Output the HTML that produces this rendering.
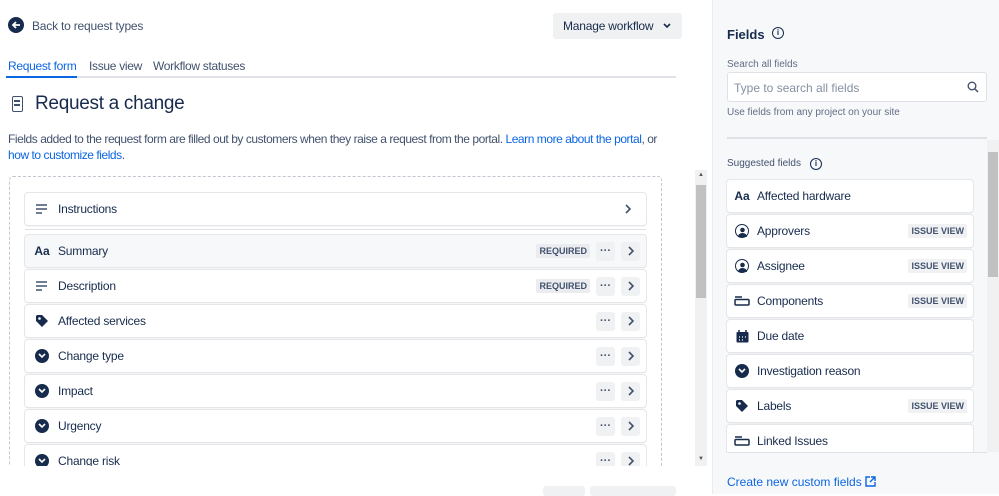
<!DOCTYPE html>
<html><head><style>
*{box-sizing:border-box;margin:0;padding:0}
body{width:999px;height:494px;overflow:hidden;background:#fff;font-family:"Liberation Sans",sans-serif;color:#172b4d;position:relative;font-size:12px}
.a{position:absolute;white-space:nowrap}
.row{position:absolute;left:25px;width:621px;height:32px;border-radius:3px;box-shadow:0 0 0 1px #e4e6ea,0 1px 1px #c1c7d0;background:#fff;display:flex;align-items:center}
.row .ic{width:32px;display:flex;justify-content:center;align-items:center;margin-left:1px}
.row .t{flex:1;font-size:12px;color:#172b4d;letter-spacing:-0.2px}
.req{background:#ebecf0;color:#42526e;font-size:9px;font-weight:bold;padding:2px 3px;border-radius:2px;margin-right:6px}
.btn{width:19px;height:19px;background:#f0f1f3;border-radius:3px;display:flex;align-items:center;justify-content:center;margin-right:6px;font-size:11px;font-weight:bold;color:#42526e}
.card{position:absolute;left:727px;width:246px;height:32px;background:#fff;border-radius:3px;box-shadow:0 0 0 1px #e4e6ea,0 1px 1px #c1c7d0;display:flex;align-items:center}
.card .ic{width:30px;display:flex;justify-content:center}
.card .t{flex:1;font-size:12px;letter-spacing:-0.2px}
.iv{background:#f0f1f3;color:#42526e;font-size:9px;font-weight:bold;padding:2px 3px;border-radius:2px;margin-right:6px}
.circ{width:14px;height:14px;border-radius:50%;background:#172b4d;display:flex;align-items:center;justify-content:center}
</style></head><body>
<svg width="0" height="0" style="position:absolute"><defs><symbol id="chev" viewBox="0 0 8 10"><path d="M2 1l4 4-4 4" stroke="#42526e" stroke-width="1.6" fill="none"/></symbol></defs></svg>
<div class="a" style="left:8px;top:17px;width:16px;height:16px;border-radius:50%;background:#172b4d"><svg width="16" height="16"><path d="M12 8H5M8 5 5 8l3 3" stroke="#fff" stroke-width="1.8" fill="none"/></svg></div>
<div class="a" style="left:32px;top:19px;font-size:12px;color:#42526e;letter-spacing:-0.2px">Back to request types</div>
<div class="a" style="left:553px;top:13px;width:129px;height:26px;background:#f0f1f3;border-radius:3px;font-size:12px;padding:6px 10px;letter-spacing:-0.2px">Manage workflow <svg width="8" height="6" style="margin-left:6px;vertical-align:1px"><path d="M1 1l3 3 3-3" stroke="#172b4d" stroke-width="1.6" fill="none"/></svg></div>
<div class="a" style="left:8px;top:59px;font-size:12px;color:#0c66e4;letter-spacing:-0.3px">Request form</div>
<div class="a" style="left:89px;top:59px;font-size:12px;color:#42526e;letter-spacing:-0.3px">Issue view</div>
<div class="a" style="left:153px;top:59px;font-size:12px;color:#42526e;letter-spacing:-0.3px">Workflow statuses</div>
<div class="a" style="left:6px;top:76px;width:670px;height:2px;background:#dfe1e6"></div>
<div class="a" style="left:6px;top:76px;width:71px;height:2px;background:#0c66e4"></div>
<div class="a" style="left:12px;top:96px;width:11px;height:16px;border:1.5px solid #42526e;border-radius:2px"><div style="position:absolute;left:1px;top:3px;width:6px;height:1.5px;background:#42526e"></div><div style="position:absolute;left:1px;top:7px;width:6px;height:1.5px;background:#42526e"></div></div>
<div class="a" style="left:35px;top:93px;font-size:19px;color:#172b4d;letter-spacing:-0.3px">Request a change</div>
<div class="a" style="left:8px;top:131px;width:680px;font-size:12px;line-height:16px;color:#42526e;white-space:normal;letter-spacing:-0.45px">Fields added to the request form are filled out by customers when they raise a request from the portal. <span style="color:#0c66e4">Learn more about the portal</span>, or<br><span style="color:#0c66e4">how to customize fields</span>.</div>
<div class="a" style="left:9px;top:176px;width:653px;height:300px;border:1px dashed #c1c7d0;border-radius:4px"></div>

<div class="row" style="top:193px"><div class="ic"><svg width="12" height="10"><path d="M0 1h11M0 5h11M0 9h6" stroke="#42526e" stroke-width="1.6"/></svg></div><div class="t">Instructions</div><svg width="8" height="10" style="margin-right:14px"><use href="#chev"/></svg></div>
<div class="a" style="left:25px;top:229px;width:621px;height:1px;background:#dfe1e6"></div>

<div class="row" style="top:235px;background:#f7f8f9"><div class="ic" style="font-weight:bold;font-size:12px">Aa</div><div class="t">Summary</div><span class="req">REQUIRED</span><div class="btn">···</div><div class="btn"><svg width="8" height="10"><use href="#chev"/></svg></div></div>
<div class="row" style="top:270px"><div class="ic"><svg width="12" height="10"><path d="M0 1h11M0 5h11M0 9h6" stroke="#42526e" stroke-width="1.6"/></svg></div><div class="t">Description</div><span class="req">REQUIRED</span><div class="btn">···</div><div class="btn"><svg width="8" height="10"><use href="#chev"/></svg></div></div>
<div class="row" style="top:305px"><div class="ic"><svg width="14" height="14"><path d="M1 2v5l6 6 6-6-6-6H2z" fill="#172b4d"/><circle cx="4.5" cy="4.5" r="1.3" fill="#fff"/></svg></div><div class="t">Affected services</div><div class="btn">···</div><div class="btn"><svg width="8" height="10"><use href="#chev"/></svg></div></div>
<div class="row" style="top:340px"><div class="ic"><div class="circ"><svg width="8" height="6"><path d="M1 1l3 3 3-3" stroke="#fff" stroke-width="1.6" fill="none"/></svg></div></div><div class="t">Change type</div><div class="btn">···</div><div class="btn"><svg width="8" height="10"><use href="#chev"/></svg></div></div>
<div class="row" style="top:375px"><div class="ic"><div class="circ"><svg width="8" height="6"><path d="M1 1l3 3 3-3" stroke="#fff" stroke-width="1.6" fill="none"/></svg></div></div><div class="t">Impact</div><div class="btn">···</div><div class="btn"><svg width="8" height="10"><use href="#chev"/></svg></div></div>
<div class="row" style="top:410px"><div class="ic"><div class="circ"><svg width="8" height="6"><path d="M1 1l3 3 3-3" stroke="#fff" stroke-width="1.6" fill="none"/></svg></div></div><div class="t">Urgency</div><div class="btn">···</div><div class="btn"><svg width="8" height="10"><use href="#chev"/></svg></div></div>
<div class="row" style="top:445px"><div class="ic"><div class="circ"><svg width="8" height="6"><path d="M1 1l3 3 3-3" stroke="#fff" stroke-width="1.6" fill="none"/></svg></div></div><div class="t">Change risk</div><div class="btn">···</div><div class="btn"><svg width="8" height="10"><use href="#chev"/></svg></div></div>
<div class="a" style="left:0;top:466px;width:690px;height:28px;background:#fff"></div>
<div class="a" style="left:543px;top:486px;width:42px;height:10px;background:#f0f1f3;border-radius:3px"></div>
<div class="a" style="left:590px;top:486px;width:86px;height:10px;background:#f0f1f3;border-radius:3px"></div>
<div class="a" style="left:695px;top:170px;width:12px;height:296px;background:#f1f1f1"></div>
<div class="a" style="left:696px;top:185px;width:10px;height:113px;background:#c1c1c1"></div>
<div class="a" style="left:698px;top:172px;font-size:6px;color:#555">▲</div>
<div class="a" style="left:698px;top:456px;font-size:6px;color:#555">▼</div>

<div class="a" style="left:712px;top:0;width:287px;height:494px;background:#f7f8f9;border-left:1px solid #ebecf0"></div>
<div class="a" style="left:727px;top:27px;font-size:13px;font-weight:bold">Fields</div>
<div class="a" style="left:772px;top:27px;width:12px;height:12px;border:1.5px solid #172b4d;border-radius:50%;font-size:8px;font-weight:bold;text-align:center;line-height:9px">i</div>
<div class="a" style="left:727px;top:59px;font-size:10px;color:#626f86">Search all fields</div>
<div class="a" style="left:727px;top:72px;width:260px;height:30px;background:#fff;border:1px solid #dfe1e6;border-radius:3px;font-size:12px;color:#8590a2;padding:8px 6px">Type to search all fields</div>
<svg class="a" style="left:967px;top:81px" width="12" height="12"><circle cx="5" cy="5" r="3.8" stroke="#42526e" stroke-width="1.4" fill="none"/><path d="M8 8l3 3" stroke="#42526e" stroke-width="1.5"/></svg>
<div class="a" style="left:727px;top:107px;font-size:10px;color:#626f86">Use fields from any project on your site</div>
<div class="a" style="left:727px;top:137px;width:260px;height:2px;background:#dfe1e6"></div>
<div class="a" style="left:727px;top:158px;font-size:10px;color:#42526e">Suggested fields</div>
<div class="a" style="left:810px;top:158px;width:12px;height:12px;border:1.5px solid #172b4d;border-radius:50%;font-size:8px;font-weight:bold;text-align:center;line-height:9px">i</div>
<div class="card" style="top:180px"><div class="ic" style="font-weight:bold;font-size:12px">Aa</div><div class="t">Affected hardware</div></div>
<div class="card" style="top:215px"><div class="ic"><div class="circ" style="border:1.5px solid #172b4d;background:#fff"><svg width="11" height="11"><circle cx="5.5" cy="4" r="2.3" fill="#172b4d"/><path d="M1 11a4.5 4 0 0 1 9 0z" fill="#172b4d"/></svg></div></div><div class="t">Approvers</div><span class="iv">ISSUE VIEW</span></div>
<div class="card" style="top:250px"><div class="ic"><div class="circ" style="border:1.5px solid #172b4d;background:#fff"><svg width="11" height="11"><circle cx="5.5" cy="4" r="2.3" fill="#172b4d"/><path d="M1 11a4.5 4 0 0 1 9 0z" fill="#172b4d"/></svg></div></div><div class="t">Assignee</div><span class="iv">ISSUE VIEW</span></div>
<div class="card" style="top:285px"><div class="ic"><svg width="16" height="10"><rect x="1" y="3.5" width="14" height="5.5" rx="1" stroke="#172b4d" stroke-width="1.5" fill="none"/><path d="M1 1h7" stroke="#172b4d" stroke-width="1.5"/></svg></div><div class="t">Components</div><span class="iv">ISSUE VIEW</span></div>
<div class="card" style="top:320px"><div class="ic"><svg width="13" height="13"><rect x="0.5" y="2" width="12" height="10.5" rx="1" fill="#172b4d"/><path d="M3 0v3M10 0v3" stroke="#172b4d" stroke-width="1.5"/><path d="M3 7h1M6 7h1M9 7h1M3 10h1M6 10h1" stroke="#fff" stroke-width="1.2"/></svg></div><div class="t">Due date</div></div>
<div class="card" style="top:355px"><div class="ic"><div class="circ"><svg width="8" height="6"><path d="M1 1l3 3 3-3" stroke="#fff" stroke-width="1.6" fill="none"/></svg></div></div><div class="t">Investigation reason</div></div>
<div class="card" style="top:390px"><div class="ic"><svg width="14" height="14"><path d="M1 2v5l6 6 6-6-6-6H2z" fill="#172b4d"/><circle cx="4.5" cy="4.5" r="1.3" fill="#fff"/></svg></div><div class="t">Labels</div><span class="iv">ISSUE VIEW</span></div>
<div class="card" style="top:425px"><div class="ic"><svg width="16" height="10"><rect x="1" y="3.5" width="14" height="5.5" rx="1" stroke="#172b4d" stroke-width="1.5" fill="none"/><path d="M1 1h7" stroke="#172b4d" stroke-width="1.5"/></svg></div><div class="t">Linked Issues</div></div>
<div class="a" style="left:713px;top:453px;width:286px;height:41px;background:#f7f8f9"></div>
<div class="a" style="left:727px;top:452px;width:260px;height:1px;background:#dfe1e6"></div>
<div class="a" style="left:987px;top:140px;width:12px;height:312px;background:#f1f1f1"></div>
<div class="a" style="left:988px;top:152px;width:10px;height:125px;background:#c1c1c1"></div>
<div class="a" style="left:727px;top:475px;font-size:12px;color:#0c66e4">Create new custom fields <svg width="11" height="11" style="vertical-align:-1px"><path d="M5 1H1v9h9V6M6 1h4v4M10 1 5 6" stroke="#0c66e4" stroke-width="1.4" fill="none"/></svg></div>
</body></html>
